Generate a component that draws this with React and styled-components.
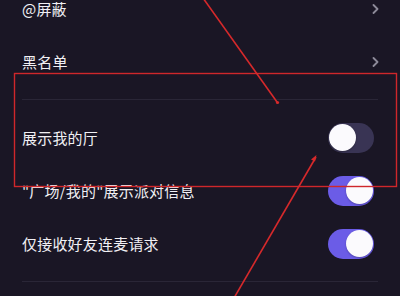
import React from 'react';
import styled, { createGlobalStyle } from 'styled-components';

const GlobalStyle = createGlobalStyle`
  html, body {
    margin: 0;
    padding: 0;
    background: #1a1625;
  }
  body {
    font-family: "Noto Sans CJK SC", "Noto Sans", sans-serif;
  }
`;

const Screen = styled.div`
  position: relative;
  width: 400px;
  height: 296px;
  overflow: hidden;
  background: #1a1625;
`;

const List = styled.div`
  margin-top: -18px;
  padding: 0 22px;
`;

const Section = styled.div`
  padding: ${(p) => (p.$pad ? '11px 0' : '0 0 11px')};
  border-bottom: 1px solid #2a2637;
`;

const Row = styled.div`
  height: 53px;
  display: flex;
  align-items: center;
  justify-content: space-between;
`;

const Label = styled.span`
  font-size: 15px;
  line-height: 16px;
  color: #f1f0f4;
  letter-spacing: 0.2px;
`;

const Chevron = styled.svg`
  width: 7px;
  height: 10px;
  margin-right: -1px;
`;

const Track = styled.div`
  width: 46px;
  height: 30px;
  margin-right: 4px;
  border-radius: 15px;
  background: ${(p) => (p.$on ? '#6b5ce7' : '#393454')};
  display: flex;
  align-items: center;
  justify-content: ${(p) => (p.$on ? 'flex-end' : 'flex-start')};
  padding: 0 1px;
  box-sizing: border-box;
`;

const Knob = styled.div`
  width: 27px;
  height: 27px;
  border-radius: 50%;
  background: #fbfafd;
  box-shadow: 0 1px 2px rgba(0, 0, 0, 0.25);
`;

const Marks = styled.svg`
  position: absolute;
  left: 0;
  top: 0;
  pointer-events: none;
`;

const Toggle = ({ on }) => (
  <Track $on={on}>
    <Knob />
  </Track>
);

const Arrow = () => (
  <Chevron viewBox="0 0 7 10">
    <path d="M1.5 1 L5.5 5 L1.5 9" fill="none" stroke="#8d8a99" strokeWidth="1.8" strokeLinecap="round" strokeLinejoin="round" />
  </Chevron>
);

const App = () => (
  <Screen>
    <GlobalStyle />
    <List>
      <Section>
        <Row>
          <Label>@屏蔽</Label>
          <Arrow />
        </Row>
        <Row>
          <Label>黑名单</Label>
          <Arrow />
        </Row>
      </Section>
      <Section $pad>
        <Row>
          <Label>展示我的厅</Label>
          <Toggle />
        </Row>
        <Row>
          <Label>"广场/我的"展示派对信息</Label>
          <Toggle on />
        </Row>
        <Row>
          <Label>仅接收好友连麦请求</Label>
          <Toggle on />
        </Row>
      </Section>
    </List>
    <Marks width="400" height="296" viewBox="0 0 400 296">
      <rect x="14.5" y="73.5" width="382" height="113" fill="none" stroke="#cf272b" strokeWidth="1.4" />
      <line x1="203" y1="-2" x2="277" y2="102" stroke="#d6292b" strokeWidth="1.6" />
      <circle cx="277.5" cy="102.5" r="1.6" fill="#d6292b" />
      <line x1="234" y1="298" x2="316" y2="157" stroke="#d6292b" strokeWidth="1.6" />
      <path d="M316.5 155 L311 159.5 L315 161.5 Z" fill="#d6292b" />
    </Marks>
  </Screen>
);

export default App;
